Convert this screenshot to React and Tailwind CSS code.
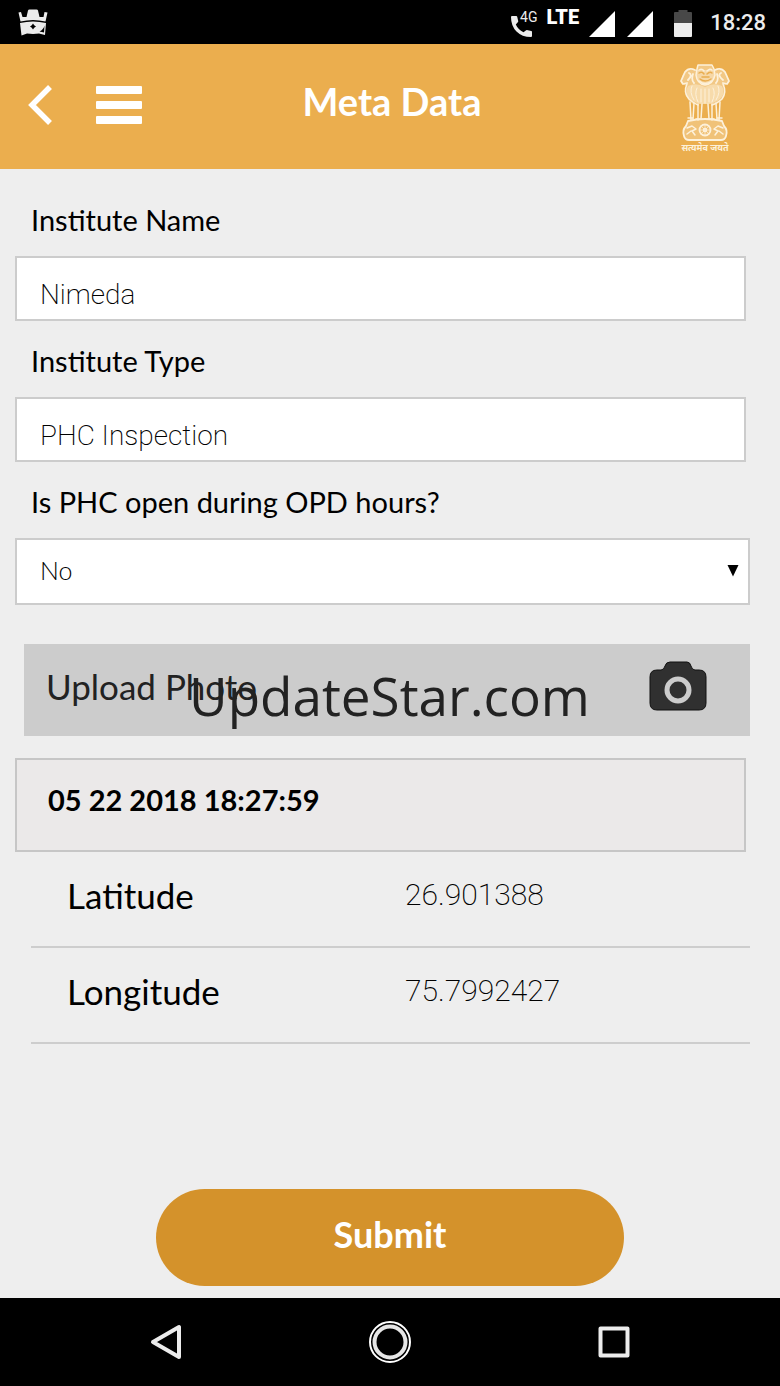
import React, { useState } from "react";

function CrownIcon() {
  return (
    <svg viewBox="0 0 30 27" className="h-[27px] w-[30px]" fill="#ececec" aria-hidden="true">
      <path d="M.5 3.500 L3 3 L4.500 8 L8.500 8 L10 1.500 Q10.300 .4 11.500 .4 L18.500 .4 Q19.700 .4 20 1.500 L21.500 8 L25.500 8 L26.500 3 L29.500 3.500 L27.500 12.500 Q15 9.500 2.500 12.500 Z" />
      <path fillRule="evenodd" d="M2 14 Q15 10.800 28 14 L27 26 L21 24.500 L15 25 L9 24.500 L3.500 26.500 Z M15 14.500 L13.800 16.300 L12 17.500 L13.800 18.700 L15 20.500 L16.200 18.700 L18 17.500 L16.200 16.300 Z M26.500 16.500 Q25.500 20.500 21.500 22.500 L26 23.500 Z" />
    </svg>
  );
}

function Emblem() {
  return (
    <svg viewBox="0 0 50 78" className="h-[78px] w-[50px]" fill="none" stroke="#fdf1da" strokeWidth="1.500" strokeLinejoin="round" strokeLinecap="round" role="img" aria-label="State Emblem">
      <path d="M15 6 L6 6 L2 12 L1 19 L6 22 L5 30 L9 37 L13 40 L37 40 L42 36 L45 29 L44 22 L49 18 L47 11 L43 6 L35 6 Z" fill="#fdf1da" fillOpacity=".4" stroke="none" />
      <path d="M8 22 Q4 29 10 35 Q16 40 25 40 Q34 40 40 35 Q46 29 42 22 Q34 18 25 23 Q16 18 8 22 Z" fill="#fdf1da" fillOpacity=".45" stroke="none" />
      <path d="M17 5 L18 1 H32 L34 5 L35 11 Q33 20 25 21 Q17 20 16 11 Z" fill="#fdf1da" fillOpacity=".4" />
      <path d="M19 9 Q22 7 24 10 M27 10 Q30 7 32 9 M22 13 h7 M20 15 Q25 19 31 15" stroke="#e9ad50" />
      <path d="M19 6 Q22 4 24 7 M27 7 Q30 4 32 6 M19 17 Q25 22 32 17" />
      <path d="M15 6 Q9 3 5 8 L1 17 L3 20 L7 19 M35 6 Q41 3 45 8 L49 17 L47 20 L43 19 M9 9 Q13 11 8 16 M41 9 Q37 11 43 16 M13 10 Q11 16 14 19 M37 10 Q39 16 36 19" strokeWidth="1.800" />
      <path d="M7 20 Q3 28 9 35 Q15 40 18 41 M43 20 Q47 28 42 35 Q36 40 32 41" />
      <path d="M12 22 Q9 28 14 36 M17 24 Q14 30 18 38 M21 25 v13 M25 25 v14 M29 25 v13 M33 24 Q36 30 32 38 M38 22 Q41 28 36 36" strokeWidth="1" />
      <path d="M10 38 L11 56 M14 39 L13 56 M18 40 L18 56 M22 40 L21 55 M28 40 L29 55 M32 40 L32 56 M36 39 L37 56 M40 38 L39 56 M8 54 h5 M16 55 h6 M28 55 h6 M37 54 h5" />
      <path d="M8 57 Q25 53 42 57 L44 62 Q48 66 46 72 Q45 76 41 76 H9 Q5 76 4 72 Q2 66 6 62 Z" fill="#fdf1da" fillOpacity=".3" strokeWidth="1.800" />
      <circle cx="25" cy="66" r="5.500" strokeWidth="1.800" />
      <circle cx="25" cy="66" r="1.500" />
      <path d="M25 60.500 v11 M19.500 66 h11 M21 62 l8 8 M29 62 l-8 8" strokeWidth=".7" />
      <path d="M7 64 L12 62 L16 65 L12 67 L15 71 M7 70 L11 67 M43 64 L38 62 L34 65 L38 67 L35 71 M43 70 L39 67" />
    </svg>
  );
}

function StatusBar() {
  return (
    <div className="flex h-11 items-center bg-black pr-[14px] pl-[18px] text-[#ececec]">
      <CrownIcon />
      <div className="ml-auto flex items-center">
        <div className="flex">
          <svg viewBox="0 0 24 24" className="mt-2 h-6 w-6" fill="#ececec" aria-hidden="true">
            <path d="M2 2 Q1 2 1 3 Q1 12 6.500 17.500 Q12 23 21 23 Q22 23 22 22 L22 17.800 Q22 17 21.200 16.900 L16.800 16 Q16.200 16 15.800 16.400 L13.500 18.300 Q8 15.500 5.800 10.500 L8 8 Q8.400 7.500 8.200 6.900 L7.200 2.800 Q7 2 6.300 2 Z" />
          </svg>
          <span className="-ml-[14px] font-[Roboto] text-[14px] leading-[22px]">4G</span>
        </div>
        <span className="mr-[9px] mb-[10px] ml-[9px] font-[Roboto] text-[20px] leading-6 font-black text-white">LTE</span>
        <svg viewBox="0 0 66 28" className="mt-1 h-7 w-[66px]" fill="#fff" aria-hidden="true">
          <path d="M1 27 L27 1 V27 Z M39 27 L65 1 V27 Z" />
        </svg>
        <svg viewBox="0 0 18 28" className="mt-1 ml-5 h-7 w-[18px]" aria-hidden="true">
          <path d="M0 14 V3 Q0 2 1 2 H4.500 V0 H13.500 V2 H17 Q18 2 18 3 V14 Z" fill="#484848" />
          <path d="M0 13 H18 V26 Q18 27 17 27 H1 Q0 27 0 26 Z" fill="#ececec" />
        </svg>
        <span className="ml-[18px] pt-[2px] font-[Roboto] text-[22px] leading-[42px] font-medium">18:28</span>
      </div>
    </div>
  );
}

function Header() {
  return (
    <header className="grid h-[125px] grid-cols-[1fr_auto_1fr] items-center bg-[#ebae4e] pr-6 pl-7">
      <div className="flex items-center gap-[42px] pb-1">
        <button type="button" aria-label="Back">
          <svg viewBox="0 0 26 42" className="h-[42px] w-[26px]" fill="none" stroke="#fff" strokeWidth="5.500" strokeLinejoin="miter">
            <path d="M22 3 L4 21 L22 39" />
          </svg>
        </button>
        <button type="button" aria-label="Menu">
          <svg viewBox="0 0 46 40" className="h-10 w-[46px]" fill="#fff">
            <rect y="1" width="46" height="8" rx="1" />
            <rect y="16" width="46" height="8" rx="1" />
            <rect y="31" width="46" height="8" rx="1" />
          </svg>
        </button>
      </div>
      <h1 className="pb-3 text-[38px] leading-[46px] font-bold text-white">Meta Data</h1>
      <div className="mr-[26px] flex flex-col items-center justify-self-end pt-1">
        <Emblem />
        <span className="font-['Noto_Sans'] text-[9px] leading-3 font-bold text-[#fdf1da]">सत्यमेव जयते</span>
      </div>
    </header>
  );
}

const labelClass = "block px-4 pt-[22px] pb-[18px] text-[29px] leading-9";

function TextField({ id, label, value }) {
  const [text, setText] = useState(value);
  return (
    <div>
      <label htmlFor={id} className={labelClass}>{label}</label>
      <div className="pr-1">
        <input
          id={id}
          value={text}
          onChange={(e) => setText(e.target.value)}
          className="block h-[65px] w-full border-2 border-[#cccccc] bg-white px-[23px] pt-3 font-[Roboto] text-[28px] font-extralight outline-none"
        />
      </div>
    </div>
  );
}

function Reading({ name, value }) {
  return (
    <div className="flex h-24 border-b-2 border-[#cdcdcd] pt-5 pl-9">
      <dt className="w-[338px] text-[35px] leading-[46px]">{name}</dt>
      <dd className="font-[Roboto] text-[30px] leading-[46px] font-extralight">{value}</dd>
    </div>
  );
}

function NavBar() {
  return (
    <nav className="flex h-[88px] items-center justify-between bg-black px-[145px]">
      <button type="button" aria-label="System back">
        <svg viewBox="0 0 42 42" className="h-[42px] w-[42px]" fill="none" stroke="#ececec" strokeWidth="4" strokeLinejoin="round">
          <path d="M8 21 L34 6 V36 Z" />
        </svg>
      </button>
      <button type="button" aria-label="Home">
        <svg viewBox="0 0 42 42" className="h-[42px] w-[42px]" fill="none">
          <circle cx="21" cy="21" r="20" stroke="#fff" strokeWidth="2" />
          <circle cx="21" cy="21" r="15.500" stroke="#e6e6e6" strokeWidth="4" />
        </svg>
      </button>
      <button type="button" aria-label="Recent apps">
        <svg viewBox="0 0 42 42" className="h-[42px] w-[42px]" fill="none" stroke="#ececec" strokeWidth="4" strokeLinejoin="round">
          <rect x="7.500" y="7.500" width="27" height="27" />
        </svg>
      </button>
    </nav>
  );
}

export default function App() {
  const [open, setOpen] = useState("No");
  return (
    <div className="flex min-h-screen flex-col bg-[#eeeeee] font-[Lato,sans-serif] text-black">
      <StatusBar />
      <Header />
      <main className="flex flex-1 flex-col pt-[11px] pr-[30px] pb-3 pl-[15px]">
        <TextField id="name" label="Institute Name" value="Nimeda" />
        <TextField id="type" label="Institute Type" value="PHC Inspection" />
        <label htmlFor="open" className={labelClass}>Is PHC open during OPD hours?</label>
        <div className="grid">
          <select
            id="open"
            value={open}
            onChange={(e) => setOpen(e.target.value)}
            className="col-start-1 row-start-1 h-[67px] w-full appearance-none border-2 border-[#cccccc] bg-white px-[23px] pb-[2px] text-[25px] font-light"
          >
            <option>No</option>
            <option>Yes</option>
          </select>
          <svg viewBox="0 0 12 12" className="pointer-events-none col-start-1 row-start-1 mr-[11px] mb-[2px] h-3 w-3 self-center justify-self-end" aria-hidden="true">
            <path d="M.5 0 H11.500 L6 11.500 Z" />
          </svg>
        </div>
        <div className="relative mt-[39px] ml-[9px]">
          <button type="button" className="flex h-[92px] w-full items-center justify-between bg-[#cccccc] pr-[43px] pb-2 pl-[22px] text-[35px] leading-[46px] text-[#222222]">
            Upload Photo
            <svg viewBox="0 0 58 50" className="h-[50px] w-[58px]" aria-hidden="true">
              <path d="M8 9 H12 Q15 9 16 5 Q17 1 21 1 H38 Q41 1 42 5 Q43 9 46 9 H50 Q57 9 57 16 V42 Q57 49 50 49 H8 Q1 49 1 42 V16 Q1 9 8 9 Z" fill="#303030" stroke="#111" />
              <circle cx="29" cy="29" r="11" fill="#303030" stroke="#cccccc" strokeWidth="5" />
            </svg>
          </button>
          <span className="pointer-events-none absolute top-[15px] left-[165px] font-['Open_Sans'] text-[53px] leading-[74px] text-[#222222]">UpdateStar.com</span>
        </div>
        <div className="mt-[22px] mr-1 h-[94px] border-2 border-[#c6c6c6] bg-[#ebe9e9] px-[31px] pt-[22px] text-[29px] leading-9 font-bold">
          05 22 2018 18:27:59
        </div>
        <dl className="ml-4">
          <Reading name="Latitude" value="26.901388" />
          <Reading name="Longitude" value="75.7992427" />
        </dl>
        <div className="mt-auto flex justify-center pl-[15px]">
          <button type="button" className="h-[97px] w-[468px] rounded-full bg-[#d4922b] pb-2 text-[36px] leading-[46px] font-bold text-white">Submit</button>
        </div>
      </main>
      <NavBar />
    </div>
  );
}
